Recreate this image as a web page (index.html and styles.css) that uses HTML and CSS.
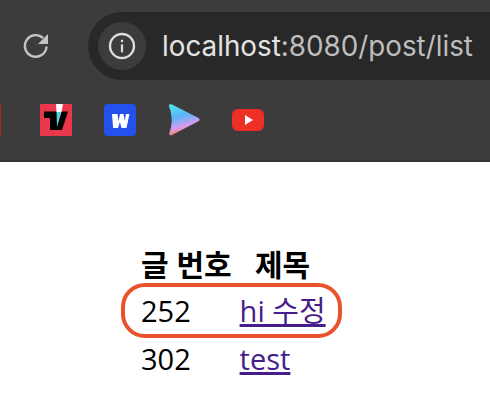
FILE: index.html
```html
<!DOCTYPE html>
<html lang="ko">
<head>
    <meta charset="UTF-8">
    <meta name="viewport" content="width=device-width, initial-scale=1.0">
    <title>글 목록</title>
    <link rel="stylesheet" href="styles.css">
</head>
<body>
    <header class="browser">
        <div class="toolbar">
            <svg class="reload" width="28" height="28" viewBox="0 0 28 28" fill="none">
                <path d="M24.5 14.5a10.8 10.8 0 1 1-3.4-8.4" stroke="#c4c4c4" stroke-width="2.4"/>
                <path d="M26 2v10H16z" fill="#c4c4c4"/>
            </svg>
            <div class="address">
                <span class="info">
                    <svg width="28" height="28" viewBox="0 0 28 28" fill="none">
                        <circle cx="14" cy="14" r="12" stroke="#dcdcdc" stroke-width="2.4"/>
                        <rect x="12.9" y="12.4" width="2.2" height="8" fill="#dcdcdc"/>
                        <rect x="12.9" y="7.8" width="2.2" height="2.4" fill="#dcdcdc"/>
                    </svg>
                </span>
                <span class="url">localhost<span class="url-rest">:8080/post/list</span></span>
            </div>
        </div>
        <div class="bookmarks">
            <span class="bookmark cut-off"></span>
            <svg class="bookmark" viewBox="0 0 32 32">
                <rect width="32" height="32" fill="#e9384c"/>
                <path d="M4 7.500h24l-6 18.500H10V14H4z" fill="#000"/>
                <path d="M16 0h7l-1.500 8h-5z" fill="#fff"/>
                <path d="M16.500 8h5L17 23z" fill="#62cdd6"/>
            </svg>
            <svg class="bookmark" viewBox="0 0 32 32">
                <rect width="32" height="32" rx="4" fill="#2450ee"/>
                <path d="M8 10h5.500l1 7 1.500-7h3.500l1.500 7 .8-7h3.700l-3 14h-5l-1.600-6-1.800 6h-5z" fill="#fff"/>
            </svg>
            <svg class="bookmark" viewBox="0 0 32 32">
                <defs>
                    <linearGradient id="playFill" x1="0.1" y1="0.05" x2="0.35" y2="1">
                        <stop offset="0" stop-color="#4fe0ee"/>
                        <stop offset="0.4" stop-color="#5db4f7"/>
                        <stop offset="0.75" stop-color="#d69bf0"/>
                        <stop offset="1" stop-color="#f57f3a"/>
                    </linearGradient>
                </defs>
                <path d="M1 2.500c-.500-2 1-2.800 3-2L30.500 14c1.500 1 1.500 2.500 0 3.300L4 31c-2 1-3.300-.500-2.600-2.500C4.500 21 4.500 11 1 2.500z" fill="url(#playFill)"/>
            </svg>
            <svg class="bookmark" viewBox="0 0 32 32">
                <rect y="5" width="32" height="22" rx="6" fill="#ee3024"/>
                <path d="M13 11l8 5-8 5z" fill="#fff"/>
            </svg>
        </div>
    </header>
    <main class="content">
        <div class="table-wrap">
            <table class="post-table">
                <tr>
                    <th>글 번호</th>
                    <th>제목</th>
                </tr>
                <tr>
                    <td>252</td>
                    <td><a href="#">hi 수정</a></td>
                </tr>
                <tr>
                    <td>302</td>
                    <td><a href="#">test</a></td>
                </tr>
            </table>
            <div class="highlight"></div>
        </div>
    </main>
</body>
</html>
```

FILE: styles.css
```css
html, body {
    margin: 0;
    height: 100%;
    overflow: hidden;
    background-color: #ffffff;
}
.browser {
    height: 160px;
    background-color: #3c3c3c;
    border-bottom: 2px solid #363636;
    overflow: hidden;
}
.toolbar {
    display: flex;
    align-items: center;
    height: 68px;
    padding-top: 12px;
}
.reload {
    margin-left: 22px;
    flex: none;
}
.address {
    display: flex;
    align-items: center;
    flex: none;
    width: 420px;
    height: 68px;
    margin-left: 38px;
    padding-left: 10px;
    box-sizing: border-box;
    background-color: #282828;
    border-radius: 34px 0 0 34px;
}
.info {
    display: flex;
    align-items: center;
    justify-content: center;
    width: 48px;
    height: 48px;
    border-radius: 50%;
    background-color: #3c3c3c;
    flex: none;
}
.url {
    margin-left: 16px;
    font-family: Inter, "Liberation Sans", sans-serif;
    font-size: 27.800px;
    color: #e3e3e3;
    white-space: nowrap;
}
.url-rest {
    color: #bdbdbd;
}
.bookmarks {
    display: flex;
    gap: 32px;
    padding-top: 24px;
}
.bookmark {
    display: block;
    width: 32px;
    height: 32px;
    flex: none;
}
/* only the last pixel of this one shows at the window edge */
.bookmark.cut-off {
    width: 1px;
    margin-right: 7px;
    background-color: #a82420;
}
.content {
    padding: 78px 0 0 135px;
}
.table-wrap {
    position: relative;
    width: 240px;
}
.post-table {
    border-collapse: separate;
    border-spacing: 4px;
    font-family: "Open Sans", "Noto Sans CJK KR", sans-serif;
    font-size: 29px;
    line-height: 40px;
    color: #000000;
}
.post-table th,
.post-table td {
    padding: 2px;
}
.post-table th {
    font-size: 30px;
    line-height: 37px;
    font-weight: bold;
}
.post-table a {
    color: #461d8c;
    text-decoration-thickness: 3px;
}
/* hand drawn ring around the edited row */
.highlight {
    position: absolute;
    left: -14px;
    top: 43px;
    width: 213px;
    height: 47px;
    border: 4px solid #e8532e;
    border-radius: 24px;
}
```
